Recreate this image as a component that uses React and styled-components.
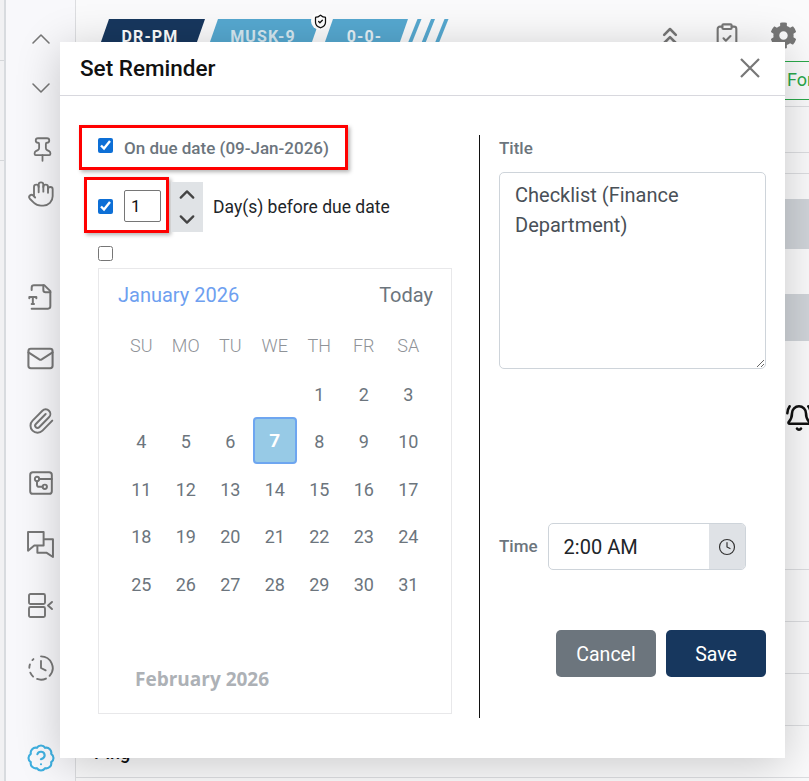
import React from 'react';
import styled, { createGlobalStyle } from 'styled-components';
import { ChevronUp, ChevronDown, ChevronsUp, Pin, Hand, Mail, Paperclip, ClipboardCheck, ClockFading, ShieldCheck, BellRing, Clock } from 'lucide-react';
import { FaCog } from 'react-icons/fa';

const Global = createGlobalStyle`
  html, body { margin: 0; padding: 0; background: #fafafb; }
  body { font-family: Roboto, "Liberation Sans", sans-serif; }
  * { box-sizing: border-box; }
`;

const Page = styled.div`
  position: relative; width: 809px; height: 781px; overflow: hidden; display: flex; background: #fafafb;
`;
const EdgeStrip = styled.div`
  width: 6px; flex: none; background: #f1f1f3; border-right: 2px solid #d8dbdf; display: flex; flex-direction: column;
`;
const EdgeCell = styled.div`
  height: ${p => p.$h}px; border-bottom: 1px solid #d5d7da;
`;
const Sidebar = styled.nav`
  width: 70px; flex: none; border-right: 1px solid #dcdde0; background: #f8f8fb; display: flex; flex-direction: column; align-items: center; color: #777; padding-top: 23px;
`;
const SideIcon = styled.span`
  display: flex; height: ${p => p.$h}px; margin-top: ${p => p.$mt || 0}px; margin-left: ${p => p.$ml || 0}px; align-items: center; justify-content: center; color: ${p => p.$color || '#777'};
`;
const Main = styled.main`
  flex: 1; min-width: 0; display: flex; flex-direction: column;
`;
const Header = styled.header`
  height: 61px; flex: none; display: flex; padding: 19px 0 0 19px; position: relative;
`;
const TabStrip = styled.div`
  display: flex; align-items: flex-start; position: relative;
`;
const Tab = styled.div`
  width: ${p => p.$w}px; height: 40px; margin-left: ${p => p.$ml || 0}px; background: ${p => p.$bg}; color: ${p => p.$fg};
  clip-path: polygon(14px 0, 100% 0, calc(100% - 14px) 100%, 0 100%);
  display: flex; justify-content: center; padding-top: 8px; padding-left: ${p => p.$pl || 0}px;
  font-weight: 700; font-size: 16px; line-height: 19px; letter-spacing: 1.1px;
`;
const Stripe = styled.div`
  width: 20px; height: 40px; margin-left: -6.5px; background: #56a8d0;
  clip-path: polygon(16px 0, 20px 0, 4px 100%, 0 100%);
`;
const ShieldBadge = styled.div`
  position: absolute; left: 216px; top: -7px; width: 18px; height: 18px; border-radius: 50%; background: #fff; color: #111;
  display: flex; align-items: center; justify-content: center;
`;
const HeaderTools = styled.div`
  margin-left: auto; display: flex; align-items: flex-start; gap: 29px; color: #777; margin-right: 12px; padding-top: 3px;
`;
const GreenRow = styled.div`
  height: 39px; flex: none; display: flex; justify-content: flex-end;
`;
const GreenTab = styled.div`
  width: 24px; overflow: hidden; border-top: 1px solid #2aa84a; border-bottom: 1px solid #2aa84a; color: #2aa84a;
  font-size: 18px; line-height: 36px; padding-left: 2px; white-space: nowrap;
`;
const Row = styled.div`
  height: ${p => p.$h}px; flex: none; border-bottom: ${p => p.$line ? '1px solid #dcdde0' : '0'}; display: flex; align-items: center;
  justify-content: ${p => p.$end ? 'flex-end' : 'flex-start'}; background: ${p => p.$bg || 'transparent'}; padding-left: ${p => p.$pl || 0}px;
`;
const PingText = styled.span`
  font-weight: 500; font-size: 18px; color: #111; position: relative; top: 1px;
`;
const BellWrap = styled.div`
  width: 24px; overflow: hidden; color: #111; margin-top: -70px;
`;

const Modal = styled.section`
  position: absolute; left: 60px; top: 42px; width: 725px; height: 716px; background: #fff; display: flex; flex-direction: column;
  box-shadow: 0 6px 42px rgba(0,0,0,.2);
`;
const ModalHead = styled.div`
  height: 54px; flex: none; border-bottom: 1px solid #d8d8de; display: flex; align-items: center; justify-content: space-between; padding: 0 25px 2px 20px;
`;
const ModalTitle = styled.h2`
  margin: 0; font-weight: 500; font-size: 22.5px; color: #111;
`;
const CloseIcon = styled.svg`
  width: 20px; height: 20px; stroke: #777; stroke-width: 2.2; fill: none; display: block; margin-bottom: 0;
`;
const ModalBody = styled.div`
  flex: 1; display: flex; padding-top: 29px; min-height: 0;
`;
const LeftCol = styled.div`
  width: 419px; flex: none; padding-left: 19px; display: flex; flex-direction: column; align-items: flex-start;
`;
const Red = styled.div`
  border: 3px solid #f00; box-shadow: 2px 2px 4px rgba(0,0,0,.3); display: flex; align-items: center; flex: none;
`;
const RedDue = styled(Red)`
  height: 45px; padding: 0 16px 0 16px; gap: 11px;
`;
const RedDays = styled(Red)`
  height: 56px; width: 85px; padding: 2px 0 0 11px; gap: 11px;
`;
const Check = styled.input.attrs({ type: 'checkbox' })`
  width: 15px; height: 15px; margin: 0; flex: none; accent-color: #0d6fd6;
`;
const DueCheck = styled(Check)`
  margin-bottom: 4px;
`;
const DueLabel = styled.span`
  font-size: 17px; font-weight: 500; color: #6c757d; line-height: 24px;
`;
const DaysRow = styled.div`
  display: flex; align-items: flex-start; margin: 7px 0 0 5px;
`;
const NumberBox = styled.div`
  width: 37px; height: 32px; border: 1px solid #767676; border-radius: 2px; font-size: 17px; line-height: 30px; padding-left: 6px; color: #111;
`;
const Spinner = styled.div`
  width: 32px; height: 50px; margin: 5px 0 0 2px; background: #e0e3e6; display: flex; flex-direction: column; align-items: center; justify-content: center; gap: 0; color: #444;
`;
const DaysLabel = styled.span`
  margin: 5px 0 0 10px; font-size: 17.5px; line-height: 50px; color: #212529;
`;
const PlainCheck = styled(Check)`
  margin: 13px 0 0 19px;
`;
const Calendar = styled.div`
  width: 354px; height: 446px; margin: 7px 0 0 19px; border: 1px solid #e8e8ea; flex: none;
`;
const CalHead = styled.div`
  height: 53px; display: flex; align-items: center; justify-content: space-between; padding: 0 18px 2px 19px;
`;
const MonthName = styled.span`
  color: #6ea0f0; font-size: 20px;
`;
const Today = styled.span`
  color: #6c757d; font-size: 20px;
`;
const DayGrid = styled.div`
  width: 311.5px; margin-left: 20px; display: grid; grid-template-columns: repeat(7, 44.5px); grid-auto-rows: 47.5px;
`;
const WeekDay = styled.div`
  display: flex; align-items: center; justify-content: center; color: #8f9398; font-size: 18px; font-weight: 300;
`;
const Day = styled.div`
  display: flex; align-items: center; justify-content: center; color: #6c757d; font-size: 18px; padding-top: 2px;
`;
const SelectedDay = styled(Day)`
  height: 47px; padding-top: 0; background: #97cae6; border: 2px solid #6ea6f0; border-radius: 4px; color: #fff; font-weight: 700; font-size: 19px;
`;
const NextMonth = styled.div`
  margin: 60px 0 0 36px; font-family: "Open Sans", Roboto, sans-serif; font-weight: 700; font-size: 19px; line-height: 24px; color: #adb1b6;
`;
const RightCol = styled.div`
  width: 306px; height: 583px; margin-top: 10px; flex: none; border-left: 1px solid #111; padding-left: 19px; padding-right: 19px; display: flex; flex-direction: column;
`;
const FieldLabel = styled.label`
  font-size: 17px; font-weight: 500; color: #6c757d; line-height: 24px;
`;
const TitleLabel = styled(FieldLabel)`
  margin: 1px 0 12px;
`;
const TimeLabel = styled(FieldLabel)`
  margin-bottom: 2px;
`;
const TitleArea = styled.textarea`
  width: 267px; height: 197px; flex: none; border: 1px solid #ced4da; border-radius: 5px; padding: 7px 15px; font: 400 20px/30px Roboto, sans-serif; color: #495057; outline: none; display: block;
`;
const TimeRow = styled.div`
  margin-top: 154px; display: flex; align-items: center; gap: 10px;
`;
const TimeGroup = styled.div`
  width: 198px; height: 47px; border: 1px solid #ced4da; border-radius: 5px; display: flex; overflow: hidden;
`;
const TimeValue = styled.div`
  flex: 1; padding: 1px 0 0 15px; font-size: 20px; line-height: 45px; color: #212529;
`;
const TimeAddon = styled.div`
  width: 36px; background: #dfe2e6; display: flex; align-items: center; justify-content: center; color: #333;
`;
const Actions = styled.div`
  margin-top: 60px; display: flex; justify-content: flex-end; gap: 10px;
`;
const Btn = styled.button`
  width: 100px; height: 47px; border: 0; border-radius: 5px; color: #fff; background: ${p => p.$bg}; font: 400 19.5px Roboto, sans-serif; padding: 2px 0 0;
`;

const days = ['SU','MO','TU','WE','TH','FR','SA'];
const cells = [null,null,null,null,1,2,3,4,5,6,7,8,9,10,11,12,13,14,15,16,17,18,19,20,21,22,23,24,25,26,27,28,29,30,31];

const Svg = ({ size, children, sw = 2, box = 24 }) => (
  <svg width={size} height={size} viewBox={`0 0 ${box} ${box}`} fill="none" stroke="currentColor" strokeWidth={sw} strokeLinecap="round" strokeLinejoin="round">{children}</svg>
);

export default function App() {
  return (
    <Page>
      <Global />
      <EdgeStrip><EdgeCell $h={61} /><EdgeCell $h={100} /></EdgeStrip>
      <Sidebar>
        <SideIcon $h={32}><ChevronUp size={32} strokeWidth={1.2} /></SideIcon>
        <SideIcon $h={32} $mt={17}><ChevronDown size={32} strokeWidth={1.2} /></SideIcon>
        <SideIcon $h={28} $mt={31} $ml={4}><Pin size={27} strokeWidth={1.6} /></SideIcon>
        <SideIcon $h={28} $mt={17}><Hand size={28} strokeWidth={1.6} /></SideIcon>
        <SideIcon $h={28} $mt={75}>
          <Svg size={28} sw={1.7}>
            <path d="M4 22h14a2 2 0 0 0 2-2V7l-5-5H6a2 2 0 0 0-2 2v2" />
            <path d="M14 2v4a2 2 0 0 0 2 2h4" />
            <path d="M2 13v-1h6v1" /><path d="M5 12v6" /><path d="M4 18h2" />
          </Svg>
        </SideIcon>
        <SideIcon $h={28} $mt={33}><Mail size={29} strokeWidth={1.7} /></SideIcon>
        <SideIcon $h={28} $mt={35}><Paperclip size={28} strokeWidth={1.7} /></SideIcon>
        <SideIcon $h={28} $mt={34} $ml={1}>
          <Svg size={26} sw={1.8}>
            <rect x="2" y="2" width="20" height="20" rx="2.5" />
            <circle cx="8.3" cy="8.3" r="2" /><circle cx="15.5" cy="15.5" r="2" />
            <path d="M10.3 8.3H22" /><path d="M8.3 10.3V13.5a2 2 0 0 0 2 2h3.2" />
          </Svg>
        </SideIcon>
        <SideIcon $h={28} $mt={33}>
          <Svg size={27} sw={1.9} box={26}>
            <path d="M1 1h15v13H7l-6 5z" />
            <path d="M17 8h8v17l-6-4H10v-6" />
          </Svg>
        </SideIcon>
        <SideIcon $h={28} $mt={34} $ml={1}>
          <Svg size={26} sw={1.9} box={26}>
            <rect x="1" y="1" width="16" height="10" rx="1.5" />
            <rect x="1" y="14" width="16" height="10" rx="1.5" />
            <path d="M24 9l-4 3.5 4 3.5" />
          </Svg>
        </SideIcon>
        <SideIcon $h={28} $mt={34}><ClockFading size={28} strokeWidth={1.6} /></SideIcon>
        <SideIcon $h={30} $mt={61} $color="#3fb0e0" $ml={1}>
          <Svg size={30} sw={1.7}>
            <path d="M3.85 8.62a4 4 0 0 1 4.78-4.77 4 4 0 0 1 6.74 0 4 4 0 0 1 4.78 4.78 4 4 0 0 1 0 6.74 4 4 0 0 1-4.77 4.78 4 4 0 0 1-6.75 0 4 4 0 0 1-4.78-4.77 4 4 0 0 1 0-6.76Z" />
            <path d="M9.09 9a3 3 0 0 1 5.83 1c0 2-3 3-3 3" /><path d="M12 17h.01" />
          </Svg>
        </SideIcon>
      </Sidebar>
      <Main>
        <Header>
          <TabStrip>
            <Tab $w={110} $bg="#17375e" $fg="#fff">DR-PM</Tab>
            <Tab $w={116} $ml={-1} $pl={2} $bg="#56a8d0" $fg="#d5e8f2">MUSK-9</Tab>
            <Tab $w={89} $ml={-1} $pl={2} $bg="#56a8d0" $fg="#e4f1f7">0-0-</Tab>
            <Stripe /><Stripe /><Stripe />
            <ShieldBadge><ShieldCheck size={15} strokeWidth={2} /></ShieldBadge>
          </TabStrip>
          <HeaderTools>
            <ChevronsUp size={28} strokeWidth={2.2} />
            <ClipboardCheck size={28} strokeWidth={1.8} />
            <FaCog size={27} />
          </HeaderTools>
        </Header>
        <GreenRow><GreenTab>For</GreenTab></GreenRow>
        <Row $h={7} $line />
        <Row $h={46} $line />
        <Row $h={21} $line />
        <Row $h={25} />
        <Row $h={50} $bg="#d0d4d9" />
        <Row $h={45} />
        <Row $h={47} $bg="#d0d4d9" />
        <Row $h={229} $line $end><BellWrap><BellRing size={28} strokeWidth={2.2} /></BellWrap></Row>
        <Row $h={52} $line />
        <Row $h={52} $line />
        <Row $h={52} $line />
        <Row $h={52} $line $pl={18}><PingText>Ping</PingText></Row>
      </Main>
      <Modal>
        <ModalHead>
          <ModalTitle>Set Reminder</ModalTitle>
          <CloseIcon viewBox="0 0 20 20"><path d="M1 1l18 18M19 1L1 19" /></CloseIcon>
        </ModalHead>
        <ModalBody>
          <LeftCol>
            <RedDue><DueCheck defaultChecked /><DueLabel>On due date (09-Jan-2026)</DueLabel></RedDue>
            <DaysRow>
              <RedDays><Check defaultChecked /><NumberBox>1</NumberBox></RedDays>
              <Spinner><ChevronUp size={26} strokeWidth={2.2} /><ChevronDown size={26} strokeWidth={2.2} /></Spinner>
              <DaysLabel>Day(s) before due date</DaysLabel>
            </DaysRow>
            <PlainCheck />
            <Calendar>
              <CalHead><MonthName>January 2026</MonthName><Today>Today</Today></CalHead>
              <DayGrid>
                {days.map(d => <WeekDay key={d}>{d}</WeekDay>)}
                {cells.map((c, i) => c === 7
                  ? <SelectedDay key={i}>{c}</SelectedDay>
                  : <Day key={i}>{c}</Day>)}
              </DayGrid>
              <NextMonth>February 2026</NextMonth>
            </Calendar>
          </LeftCol>
          <RightCol>
            <TitleLabel>Title</TitleLabel>
            <TitleArea defaultValue="Checklist (Finance Department)" />
            <TimeRow>
              <TimeLabel>Time</TimeLabel>
              <TimeGroup>
                <TimeValue>2:00 AM</TimeValue>
                <TimeAddon><Clock size={18} strokeWidth={1.6} /></TimeAddon>
              </TimeGroup>
            </TimeRow>
            <Actions>
              <Btn $bg="#6c757d">Cancel</Btn>
              <Btn $bg="#17375e">Save</Btn>
            </Actions>
          </RightCol>
        </ModalBody>
      </Modal>
    </Page>
  );
}
